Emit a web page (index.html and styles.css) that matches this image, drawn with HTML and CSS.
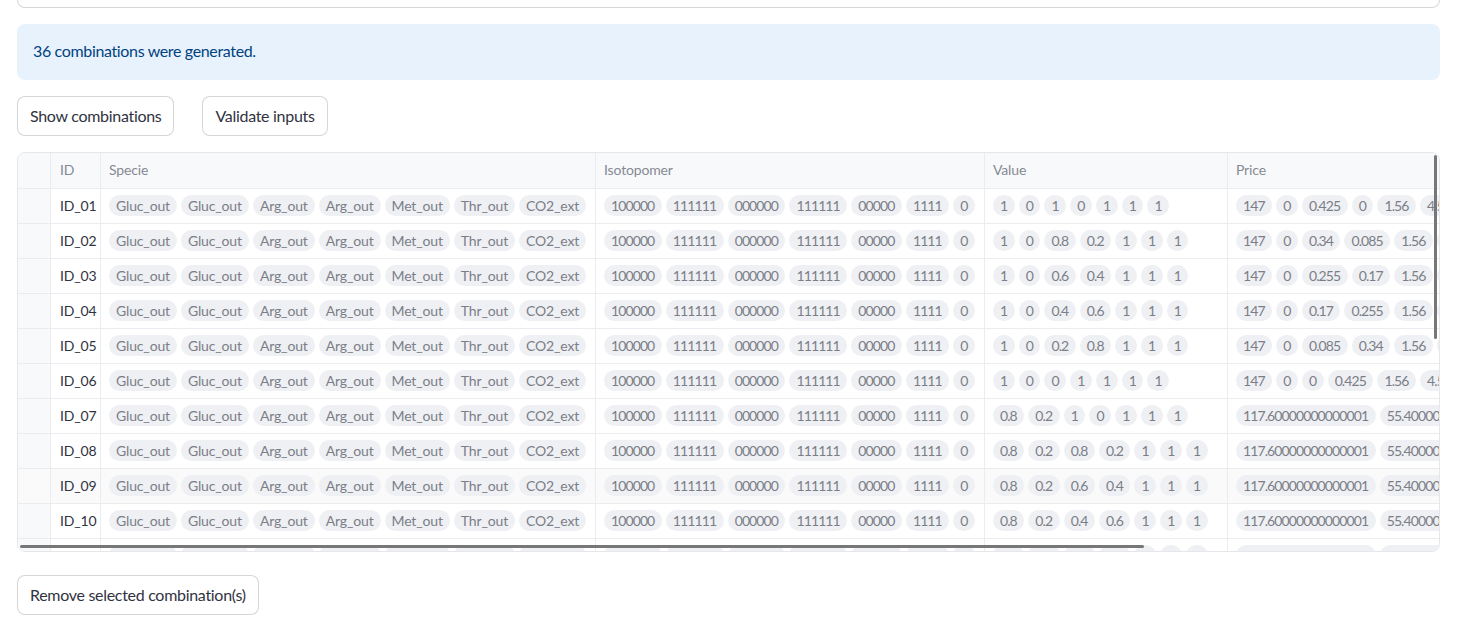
FILE: index.html
```html
<!DOCTYPE html>
<html lang="en">
<head>
    <meta charset="UTF-8">
    <meta name="viewport" content="width=device-width, initial-scale=1.0">
    <title>Combinations</title>
    <link rel="stylesheet" href="styles.css">
</head>
<body>
    <div class="main">
        <div class="top-frame"></div>

        <div class="alert">36 combinations were generated.</div>

        <div class="actions">
            <button>Show combinations</button>
            <button>Validate inputs</button>
        </div>

        <div class="grid">
            <div class="grid-body" id="grid"></div>
            <div class="scroll-v"></div>
            <div class="scroll-h"></div>
        </div>

        <div class="bottom-actions">
            <button>Remove selected combination(s)</button>
        </div>
    </div>

    <script>
        // column widths in px, row marker first
        const columns = [
            { key: 'marker', title: '', width: 33 },
            { key: 'id', title: 'ID', width: 50 },
            { key: 'specie', title: 'Specie', width: 495 },
            { key: 'iso', title: 'Isotopomer', width: 389, num: true },
            { key: 'value', title: 'Value', width: 243, num: true },
            { key: 'price', title: 'Price', width: 420, num: true }
        ];

        const species = ['Gluc_out', 'Gluc_out', 'Arg_out', 'Arg_out', 'Met_out', 'Thr_out', 'CO2_ext'];
        const isotopomers = ['100000', '111111', '000000', '111111', '00000', '1111', '0'];

        const values = [
            ['1', '0', '1', '0', '1', '1', '1'],
            ['1', '0', '0.8', '0.2', '1', '1', '1'],
            ['1', '0', '0.6', '0.4', '1', '1', '1'],
            ['1', '0', '0.4', '0.6', '1', '1', '1'],
            ['1', '0', '0.2', '0.8', '1', '1', '1'],
            ['1', '0', '0', '1', '1', '1', '1'],
            ['0.8', '0.2', '1', '0', '1', '1', '1'],
            ['0.8', '0.2', '0.8', '0.2', '1', '1', '1'],
            ['0.8', '0.2', '0.6', '0.4', '1', '1', '1'],
            ['0.8', '0.2', '0.4', '0.6', '1', '1', '1'],
            ['0.8', '0.2', '0.2', '0.8', '1', '1', '1']
        ];

        const prices = [
            ['147', '0', '0.425', '0', '1.56', '4.5', '2.1'],
            ['147', '0', '0.34', '0.085', '1.56', '4.5', '2.1'],
            ['147', '0', '0.255', '0.17', '1.56', '4.5', '2.1'],
            ['147', '0', '0.17', '0.255', '1.56', '4.5', '2.1'],
            ['147', '0', '0.085', '0.34', '1.56', '4.5', '2.1'],
            ['147', '0', '0', '0.425', '1.56', '4.5', '2.1'],
            ['117.60000000000001', '55.400000000000006', '0.425', '0'],
            ['117.60000000000001', '55.400000000000006', '0.34', '0.085'],
            ['117.60000000000001', '55.400000000000006', '0.255', '0.17'],
            ['117.60000000000001', '55.400000000000006', '0.17', '0.255'],
            ['117.60000000000001', '55.400000000000006', '0.085', '0.34']
        ];

        function pills(list) {
            return list.map(v => `<span class="pill">${v}</span>`).join('');
        }

        function cellClass(c) {
            return 'cell ' + c.key + (c.num ? ' num' : '');
        }

        function buildGrid() {
            const grid = document.getElementById('grid');
            let html = '<div class="row header">';
            columns.forEach(c => {
                html += `<div class="cell ${c.key}" style="width:${c.width}px">${c.title}</div>`;
            });
            html += '</div>';

            values.forEach((vals, i) => {
                const id = 'ID_' + String(i + 1).padStart(2, '0');
                const cells = {
                    marker: '',
                    id: id,
                    specie: pills(species),
                    iso: pills(isotopomers),
                    value: pills(vals),
                    price: pills(prices[i])
                };
                html += `<div class="row${i === 8 ? ' hover' : ''}">`;
                columns.forEach(c => {
                    html += `<div class="${cellClass(c)}" style="width:${c.width}px">${cells[c.key]}</div>`;
                });
                html += '</div>';
            });
            grid.innerHTML = html;
        }

        buildGrid();
    </script>
</body>
</html>
```

FILE: styles.css
```css
body {
    margin: 0;
    background: #fff;
    color: #31333f;
    font-family: Lato, "Noto Sans", sans-serif;
}
.main {
    padding: 0 42px 0 17px;
}
.top-frame {
    height: 7px;
    border: 1px solid rgba(49, 51, 63, 0.2);
    border-top: none;
    border-radius: 0 0 8px 8px;
}
.alert {
    margin-top: 16px;
    height: 56px;
    box-sizing: border-box;
    padding: 15px 16px 17px;
    background: rgba(28, 131, 225, 0.1);
    border-radius: 8px;
    color: #004280;
    font-size: 16px;
    line-height: 24px;
    letter-spacing: -0.35px;
}
.actions {
    margin-top: 16px;
    display: flex;
    gap: 28px;
}
button {
    height: 40px;
    padding: 0 12px 2px;
    background: #fff;
    border: 1px solid rgba(49, 51, 63, 0.2);
    border-radius: 8px;
    color: #31333f;
    font-family: inherit;
    font-size: 16px;
    letter-spacing: -0.3px;
    cursor: pointer;
}
.grid {
    position: relative;
    margin-top: 16px;
    height: 400px;
    box-sizing: border-box;
    border: 1px solid #e6e7ea;
    border-radius: 8px;
    overflow: hidden;
}
.grid-body {
    width: 1650px;
}
.row {
    display: flex;
    height: 35px;
    box-sizing: border-box;
    border-bottom: 1px solid #ebecef;
}
.row.header {
    height: 36px;
    background: #f8f9fb;
}
.row.hover .cell {
    background: #fafafb;
}
.cell {
    flex: none;
    box-sizing: border-box;
    height: 100%;
    padding: 0 8px 2px;
    border-right: 1px solid #ebecef;
    display: flex;
    align-items: center;
    gap: 4px;
    overflow: hidden;
    white-space: nowrap;
    font-size: 14px;
    letter-spacing: -0.15px;
}
.cell.num {
    letter-spacing: -0.9px;
}
.cell.marker {
    background: #f8f9fb;
}
.cell.id {
    padding-left: 9px;
    color: #31333f;
}
.header .cell,
.header .cell.id {
    color: #868993;
    letter-spacing: -0.15px;
}
.pill {
    flex: none;
    height: 21px;
    line-height: 21px;
    padding: 0 7px;
    border-radius: 11px;
    background: #eff0f3;
    color: #7b7e88;
}
.num .pill {
    padding: 0 7.5px 0 7px;
}
.scroll-v {
    position: absolute;
    top: 2px;
    right: 2px;
    width: 3px;
    height: 184px;
    background: #777;
    border-radius: 2px;
}
.scroll-h {
    position: absolute;
    left: 2px;
    bottom: 3px;
    width: 1124px;
    height: 3px;
    background: #777;
    border-radius: 2px;
}
.bottom-actions {
    margin-top: 23px;
}
```
